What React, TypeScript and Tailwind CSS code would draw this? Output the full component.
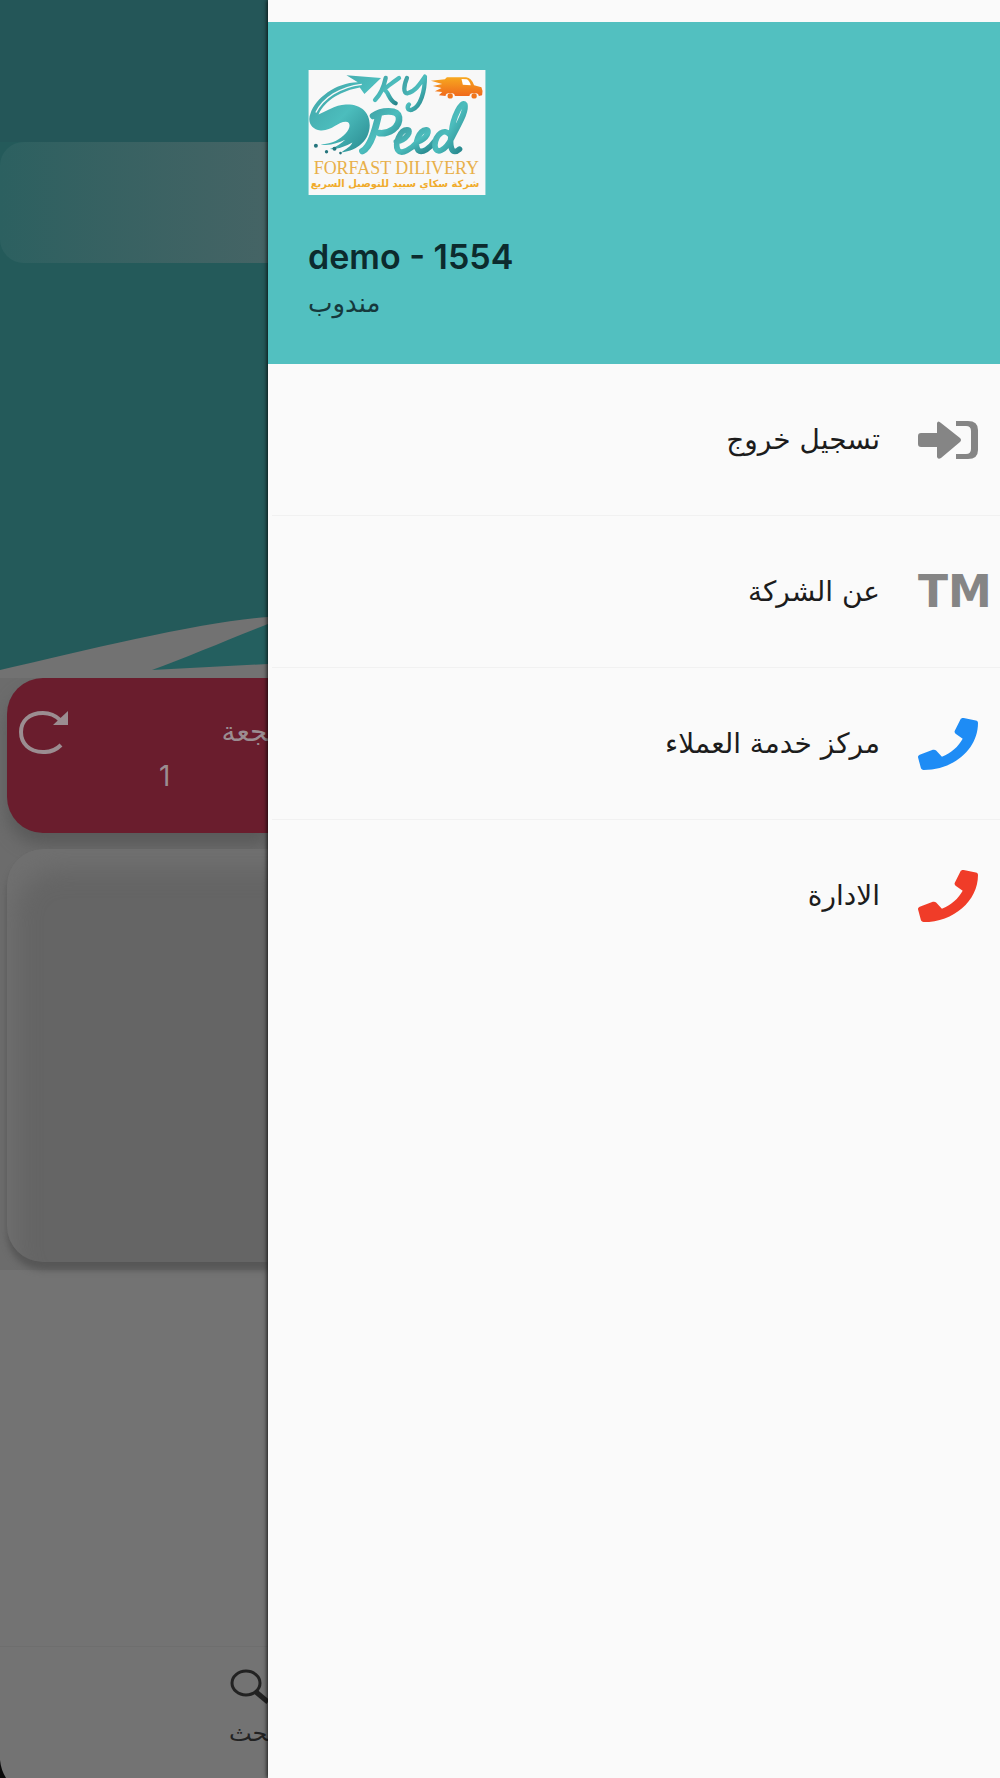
import React from 'react';
import { FaPhone } from 'react-icons/fa';

function Logo() {
    return (
        <svg viewBox="54 60 532 376" className="block h-[125px] w-[178px]" role="img" aria-label="Sky Speed">
            <defs>
                <linearGradient id="teal" x1="0" y1="0" x2="1" y2="1">
                    <stop offset="0" stopColor="#3f9fa3" />
                    <stop offset="0.5" stopColor="#4cbdbd" />
                    <stop offset="1" stopColor="#227f86" />
                </linearGradient>
                <linearGradient id="van" x1="0" y1="0" x2="0" y2="1">
                    <stop offset="0" stopColor="#f7a81f" />
                    <stop offset="1" stopColor="#f06a1c" />
                </linearGradient>
            </defs>
            <rect x="54" y="60" width="532" height="376" fill="#f8f8f8" />
            {/* swoosh and arrow */}
            <path
                fill="url(#teal)"
                d="M168 76 L272 84 L222 132 L208 113 C156 122 104 150 84 194 C110 184 132 166 166 164 C210 162 238 186 238 226 C237 270 204 302 152 308 C166 298 180 291 186 278 C166 288 144 299 118 298 C138 291 152 282 164 270 C142 280 116 290 90 284 C128 282 148 268 166 250 C180 236 182 216 166 216 C142 216 124 244 90 242 C62 239 49 215 60 190 C74 146 136 98 202 97 Z"
            />
            <path d="M76 188 C98 144 148 111 214 103" stroke="#f8f8f8" strokeWidth="4" fill="none" />
            <g fill="#25757d">
                <circle cx="76" cy="288" r="6" />
                <circle cx="108" cy="306" r="5" />
                <circle cx="132" cy="297" r="6" />
                <circle cx="150" cy="310" r="4" />
            </g>
            {/* lettering strokes */}
            <g fill="none" stroke="url(#teal)" strokeLinecap="round" strokeLinejoin="round">
                <path strokeWidth="13" d="M286 84 C280 112 268 136 254 150 M326 84 C312 94 294 108 280 118 C294 122 296 154 316 160" />
                <path strokeWidth="13" d="M350 84 C340 108 338 132 352 130 C376 124 390 100 404 80 C404 120 392 172 364 180 C350 182 350 170 356 164" />
                <path strokeWidth="20" d="M266 190 C258 226 244 290 216 304 M248 198 C274 180 322 178 326 202 C330 234 294 252 268 250" />
                <path strokeWidth="17" d="M318 276 C350 270 366 240 350 240 C330 240 312 280 322 300 C334 318 364 296 382 276 C412 266 420 240 408 240 C386 242 370 282 384 302 C396 312 420 294 434 274" />
                <path strokeWidth="17" d="M478 254 C464 234 436 252 434 286 C436 318 466 302 484 266 C502 228 530 186 524 164 C516 150 488 200 484 248 C476 294 486 318 508 298" />
            </g>
            {/* delivery van */}
            <path fill="url(#van)" d="M422 92 L464 88 L470 82 L528 82 Q544 84 552 106 L574 112 Q580 124 576 136 L566 138 A14 9 0 0 0 538 138 L494 138 A14 9 0 0 0 466 138 L446 136 L456 126 L434 124 L454 114 L428 108 L456 102 Z" />
            <path fill="#fff" d="M514 87 L530 88 Q538 92 542 106 L518 104 Z" />
            <circle cx="480" cy="138" r="8" fill="#f0761c" />
            <circle cx="552" cy="138" r="8" fill="#f0761c" />
            <text x="318" y="374" textAnchor="middle" fontSize="54" fill="#e8b04a" className="font-['Liberation_Serif',serif]">
                FORFAST DILIVERY
            </text>
            <text x="314" y="412" textAnchor="middle" fontSize="30" fontWeight="700" fill="#f0ab2c" direction="rtl" className="font-['DejaVu_Sans',sans-serif]">
                شركة سكاي سبيد للتوصيل السريع
            </text>
        </svg>
    );
}

function SignInIcon() {
    return (
        <svg viewBox="0 0 60 38" className="h-[38px] w-[60px]" fill="#858585" aria-hidden="true">
            <path d="M3 12H19V2Q20 -1 23 2L42 17Q44 19 42 21L23 37Q20 39 19 36V26H3Q0 26 0 23V15Q0 12 3 12Z" />
            <path d="M38 0H50Q60 0 60 9V29Q60 38 50 38H38V33H48Q53 33 53 28V10Q53 5 48 5H38Z" />
        </svg>
    );
}

const menu = [
    { label: 'تسجيل خروج', icon: <SignInIcon /> },
    { label: 'عن الشركة', icon: <span className="font-['DejaVu_Sans',sans-serif] text-[44px] leading-none font-bold text-[#858585]">TM</span> },
    { label: 'مركز خدمة العملاء', icon: <FaPhone className="h-[52px] w-[60px] text-[#1e8cf5]" preserveAspectRatio="none" /> },
    { label: 'الادارة', icon: <FaPhone className="h-[52px] w-[60px] text-[#f03c28]" preserveAspectRatio="none" /> },
];

function Background() {
    return (
        <div className="flex w-[268px] shrink-0 flex-col overflow-hidden bg-[#737373]">
            <div className="bg-[#245a5a]">
                <div className="h-[142px] bg-[#245658]" />
                <div className="h-[121px] rounded-l-3xl bg-linear-to-r from-[#2c6060] to-[#456465]" />
                <div className="h-[354px]" />
            </div>
            <div className="bg-[#6c6c6c] pb-2">
                <svg viewBox="0 0 268 61" preserveAspectRatio="none" className="block h-[61px] w-full" aria-hidden="true">
                    <rect width="268" height="61" fill="#727272" />
                    <path d="M0 0H268C205 4 90 32 0 53Z" fill="#245a5a" />
                    <path d="M152 53C185 41 230 22 268 7V47Z" fill="#245f5f" />
                </svg>
                <div className="ml-[7px] flex h-[155px] flex-col rounded-l-[36px] bg-[#6a1d2d] pt-8 shadow-[0_12px_16px_#5a5a5a]">
                    <div className="flex items-start justify-between">
                        <button aria-label="تحديث" className="ml-3">
                            <svg viewBox="0 0 50 44" className="h-[44px] w-[50px]" aria-hidden="true">
                                <path d="M42 35C34 43 26 42 24 42C10 42 2 33 2 22C2 11 10 3 24 3C32 3 37 6 41 10" fill="none" stroke="#9b8d91" strokeWidth="4" />
                                <path d="M49 1V15H34Z" fill="#9b8d91" />
                            </svg>
                        </button>
                        <span dir="rtl" className="text-[28px] leading-[44px] text-[#9b8d91]">&zwj;جعة</span>
                    </div>
                    <span className="ml-[152px] font-['Inter',sans-serif] text-[28px] leading-[44px] text-[#9b8d91]">1</span>
                </div>
                <div className="mt-4 ml-[7px] h-[413px] rounded-l-[36px] bg-[#656565] shadow-[0_8px_6px_#575757,inset_16px_28px_24px_-8px_#707070]" />
            </div>
            <nav className="relative mt-auto flex h-[132px] flex-col items-end border-t border-[#6e6e6e] pt-[22px]">
                <button className="flex flex-col items-end text-[#222]">
                    <svg viewBox="0 0 38 36" className="h-[36px] w-[38px]" fill="none" stroke="#222" aria-hidden="true">
                        <ellipse cx="16" cy="14" rx="14" ry="12" strokeWidth="3" />
                        <path d="M26 23L38 33" strokeWidth="5" />
                    </svg>
                    <span dir="rtl" className="mt-3 text-2xl">&zwj;حث</span>
                </button>
                <svg viewBox="0 0 6 18" className="absolute bottom-0 left-0 h-[18px] w-[6px]" aria-hidden="true">
                    <path d="M0 0Q1 10 6 18H0Z" fill="#0a0a0a" />
                </svg>
            </nav>
        </div>
    );
}

export default function App() {
    return (
        <div className="flex min-h-screen bg-[#fafafa] font-['DejaVu_Sans',sans-serif]">
            <Background />
            <aside className="relative z-10 min-w-0 flex-1 bg-[#fafafa] pt-[22px] shadow-[-1px_0_4px_rgba(0,0,0,0.8)]">
                <header className="h-[342px] bg-[#52c0c0] px-10 pt-12">
                    <Logo />
                    <h1 className="mt-10 font-['Inter',sans-serif] text-[34px] leading-[44px] font-semibold text-[#0c2b2e]">demo - 1554</h1>
                    <p dir="rtl" className="text-left text-[26px] leading-[48px] text-[#16393c]">مندوب</p>
                </header>
                <ul dir="rtl" className="divide-y divide-[#f1f1f1] pl-1">
                    {menu.map((item) => (
                        <li key={item.label}>
                            <button className="flex h-[151px] w-full items-center gap-[38px] text-[28px] text-[#1c1c1c]">
                                <span dir="ltr" className="flex w-[82px] shrink-0 items-center">{item.icon}</span>
                                <span>{item.label}</span>
                            </button>
                        </li>
                    ))}
                </ul>
            </aside>
        </div>
    );
}
